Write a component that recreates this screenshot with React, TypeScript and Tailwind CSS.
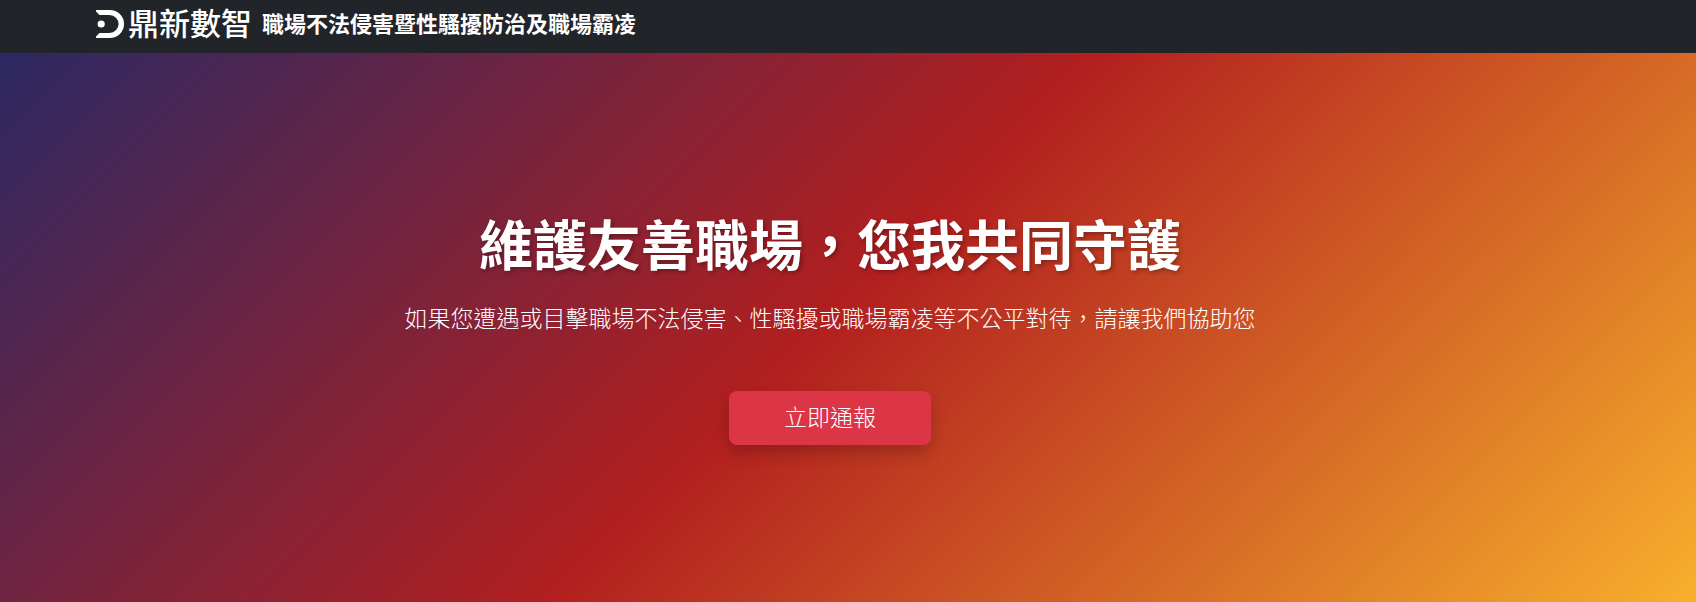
export default function App() {
  return (
    <div className="flex min-h-screen flex-col bg-[linear-gradient(135deg,#1a2a6c_-4%,#b21f1f_50%,#fdbb2d_104%)] font-['Noto_Sans_CJK_TC',sans-serif] text-white">
      <header className="bg-[#212529] px-24">
        <a href="/" className="flex h-[53px] items-center gap-2.5 pb-2.5">
          <span className="flex items-center gap-1">
            <svg viewBox="0 0 28 28" className="mt-1 h-7 w-7" aria-hidden="true">
              <path d="M0 0H14A14 14 0 0 1 14 28H0V26.4L3.4 23H13.6A9 9 0 0 0 13.6 5H3.4L0 1.6Z" fill="currentColor" />
              <circle cx="5.2" cy="14" r="3.6" fill="currentColor" />
            </svg>
            <span className="text-[31px] leading-8 font-medium">鼎新數智</span>
          </span>
          <span className="text-[22px] leading-8 font-bold">職場不法侵害暨性騷擾防治及職場霸凌</span>
        </a>
      </header>
      <main className="flex flex-1 flex-col items-center justify-center pr-9 text-center">
        <h1 className="text-[54px] leading-[64px] font-bold [text-shadow:2px_2px_4px_rgba(0,0,0,0.3)]">
          維護友善職場，您我共同守護
        </h1>
        <p className="mt-6 text-[23px] leading-9 font-light">
          如果您遭遇或目擊職場不法侵害、性騷擾或職場霸凌等不公平對待，請讓我們協助您
        </p>
        <button
          type="button"
          className="mt-14 rounded-lg bg-[#dc3545] px-[55px] pt-2.5 pb-3.5 text-[23px] leading-[30px] font-light shadow-[0_8px_16px_rgba(0,0,0,0.2)]"
        >
          立即通報
        </button>
      </main>
    </div>
  );
}
